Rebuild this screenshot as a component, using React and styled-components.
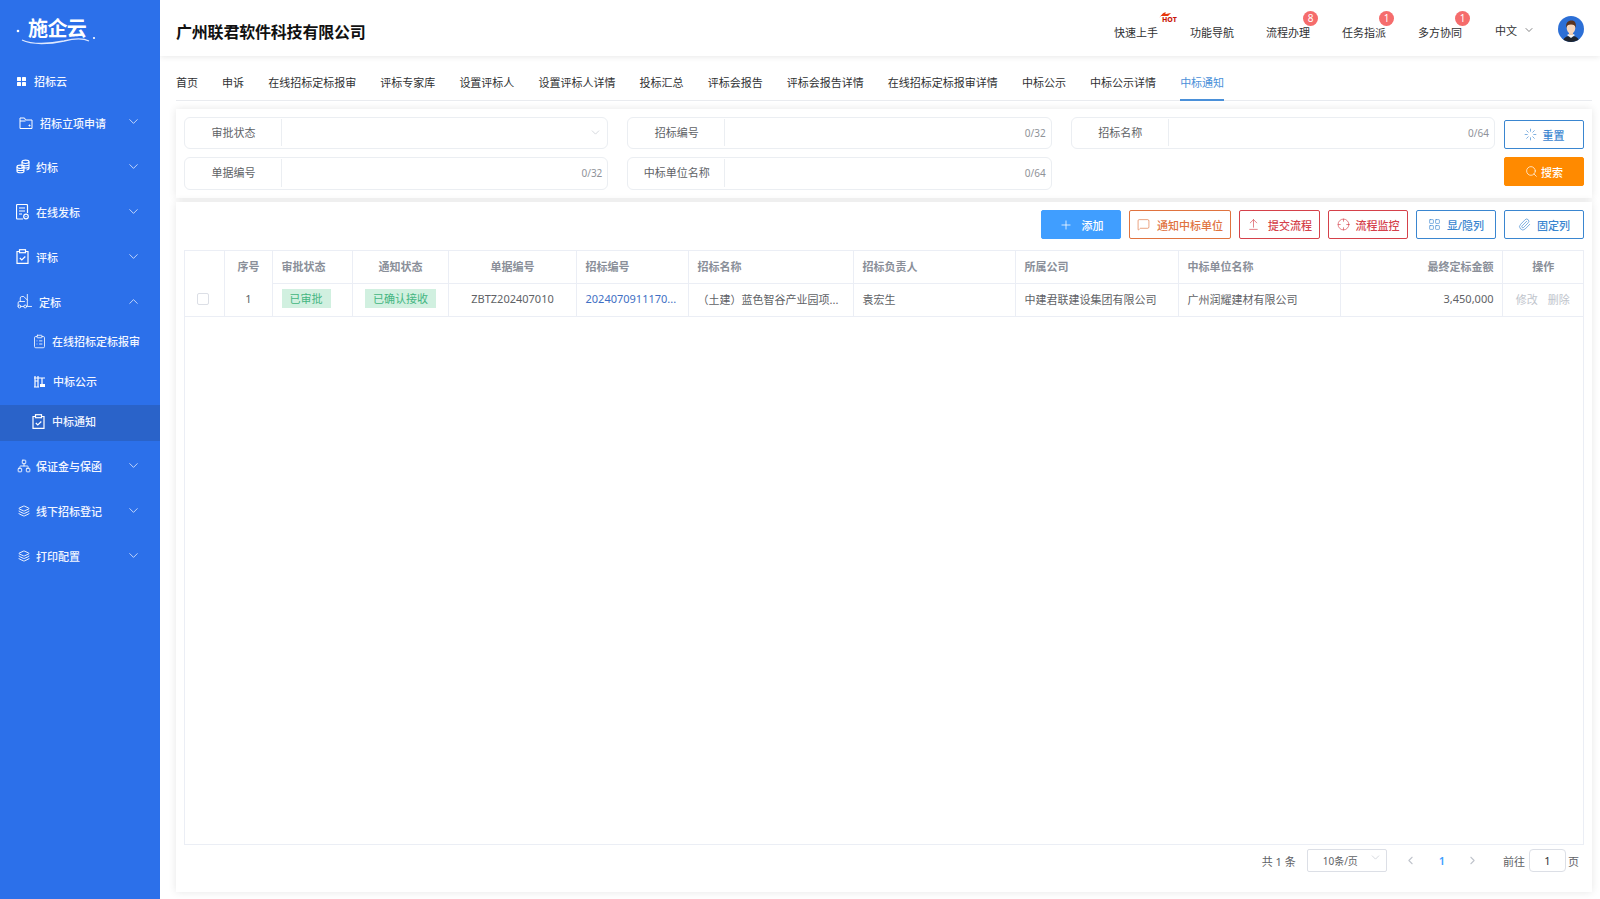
import React from "react";
import styled, { createGlobalStyle } from "styled-components";
import {
  ChevronDown, ChevronUp, ChevronLeft, ChevronRight, Forklift,
  ClipboardList, Network, Layers, Plus, MessageSquare, ArrowUpFromLine, Crosshair, LayoutGrid,
  Paperclip, Search, Loader,
} from "lucide-react";

const Global = createGlobalStyle`
  html, body { margin: 0; padding: 0; height: 100%; overflow: hidden; background: #fff; }
  #root { height: 100%; }
  * { box-sizing: border-box; }
  body { font-family: "Noto Sans", "Noto Sans CJK SC", sans-serif; font-size: 11px; color: #303133; }
`;

const Page = styled.div`display: flex; width: 1600px; height: 899px; overflow: hidden;`;
const Sidebar = styled.aside`width: 160px; flex: none; background: #2c70ea; color: #fff; display: flex; flex-direction: column; position: relative; z-index: 3;`;
const LogoBox = styled.div`height: 62px; padding: 16px 0 0 28px; position: relative;`;
const LogoText = styled.div`font-size: 20px; line-height: 26px; font-weight: 700; color: #fff; letter-spacing: -.6px;`;
const Swoosh = styled.svg`position: absolute; left: 14px; top: 26px;`;
const NavItem = styled.div`
  height: ${p => p.$h || 45}px; margin-top: ${p => p.$mt || 0}px; display: flex; align-items: center; padding-left: ${p => p.$left || 17}px;
  padding-bottom: ${p => p.$pb ?? 2}px;
  gap: ${p => p.$gap || 5}px; position: relative; font-weight: 500; color: #f2f6ff;
  background: ${p => p.$active ? "#2a63c9" : "transparent"};
  svg.ico { flex: none; }
`;
const NavChevron = styled.span`position: absolute; left: 126px; top: 50%; margin-top: -9px; display: flex;`;
const Main = styled.main`flex: 1; min-width: 0; display: flex; flex-direction: column;`;
const Header = styled.header`height: 56px; flex: none; background: #fff; box-shadow: 0 1px 6px rgba(0,0,0,.09); display: flex; align-items: center; padding: 0 16px; position: relative; z-index: 2;`;
const Company = styled.h1`margin: 0; font-size: 16px; font-weight: 700; color: #111; flex: 1; letter-spacing: -.2px; line-height: 20px; padding-top: 7px;`;
const HeaderNav = styled.nav`display: flex; gap: 32px; align-items: center; margin-right: 33px; padding-top: 10px;`;
const HeaderLink = styled.span`position: relative; width: 44px; color: #303133; white-space: nowrap; line-height: 16px;`;
const Badge = styled.span`position: absolute; top: -14px; left: 37px; width: 15px; height: 15px; border-radius: 50%; background: #f56c6c; color: #fff; font-size: 10px; line-height: 15px; text-align: center;`;
const Hot = styled.span`position: absolute; left: 44px; top: -15px; display: block; width: 22px; height: 14px;`;
const HotText = styled.span`position: absolute; left: 4px; top: 6px; font-size: 7px; line-height: 7px; font-weight: 800; color: #c9170a; letter-spacing: 0;`;
const Lang = styled.div`display: flex; align-items: center; gap: 6px; margin-right: 23px; padding-top: 4px;`;
const Avatar = styled.svg`flex: none; margin-top: 1px;`;
const Content = styled.div`flex: 1; padding: 0 8px 7px 16px; display: flex; flex-direction: column; min-height: 0;`;
const Tabs = styled.div`height: 45px; flex: none; display: flex; gap: 24.1px; border-bottom: 1px solid #e9ebef; padding-top: 10px; margin-bottom: 8px;`;
const Tab = styled.div`
  height: 35px; line-height: 33px; white-space: nowrap; color: ${p => p.$active ? "#4a90d9" : "#303133"};
  border-bottom: 2px solid ${p => p.$active ? "#4a90d9" : "transparent"};
`;
const Card = styled.section`background: #fff; box-shadow: 0 0 8px rgba(0,0,0,.1); padding: 8px;`;
const FilterCard = styled(Card)`display: flex; gap: 9px; height: 89px; flex: none;`;
const Fields = styled.div`flex: 1; display: grid; grid-template-columns: repeat(3, 1fr); grid-auto-rows: 32px; gap: 8px 19px;`;
const Field = styled.div`display: flex; border: 1px solid #ebeef2; border-radius: 6px; height: ${p => p.$tall ? 33 : 32}px; align-items: stretch; background: #fff;`;
const FieldLabel = styled.div`width: 97px; flex: none; display: flex; align-items: center; justify-content: center; padding-bottom: ${p => p.$tall ? 4 : 2}px; color: #606266; position: relative; &::after { content: ""; position: absolute; right: 0; top: 1px; bottom: 2px; width: 1px; background: #ebeef2; }`;
const FieldValue = styled.div`flex: 1; display: flex; align-items: center; justify-content: flex-end; padding-right: 5px; padding-bottom: 1px; color: #909399; font-size: 10px;`;
const FilterButtons = styled.div`width: 80px; flex: none; display: flex; flex-direction: column; gap: 8px; padding-top: 3px;`;
const Button = styled.button`
  height: 29px; width: ${p => p.$w || 80}px; flex: none; display: flex; align-items: center; justify-content: center; gap: ${p => p.$gap || 6}px;
  font: 500 11px "Noto Sans", "Noto Sans CJK SC", sans-serif; padding: 0; border-radius: 2px;
  border: 1px solid ${p => p.$border}; color: ${p => p.$color}; background: ${p => p.$bg || "#fff"};
`;
const TableCard = styled(Card)`margin-top: 4px; flex: 1; display: flex; flex-direction: column; min-height: 0;`;
const Toolbar = styled.div`display: flex; justify-content: flex-end; gap: 8px; margin-bottom: 11px; flex: none;`;
const TableWrap = styled.div`flex: 1; border: 1px solid #ebeef5; min-height: 0;`;
const Table = styled.table`width: 1398px; table-layout: fixed; border-collapse: collapse;`;
const Th = styled.th`
  height: 32px; padding: 0 8px 2px 9px; font-weight: 600; font-size: 11px; color: #8a8f99; text-align: ${p => p.$align || "left"};
  border-right: 1px solid #ebeef5; border-bottom: ${p => p.$noLine ? "0" : "1px solid #ebeef5"}; &:last-child { border-right: 0; }
`;
const Td = styled.td`
  height: 33px; padding: 0 ${p => p.$flush ? 0 : 8}px 2px ${p => p.$flush ? 0 : 9}px; color: #606266; text-align: ${p => p.$align || "left"}; white-space: nowrap; overflow: hidden; text-overflow: ellipsis;
  border-right: 1px solid #ebeef5; border-bottom: 1px solid #ebeef5; &:last-child { border-right: 0; }
`;
const Check = styled.span`display: block; width: 12px; height: 12px; margin: 2px 0 0 3px; border: 1px solid #dcdfe6; border-radius: 2px; background: #fff;`;
const Tag = styled.span`display: inline-block; height: 19px; line-height: 19px; padding: 0 8px; background: #d1f0e0; color: #43b581; font-size: 11px;`;
const LinkText = styled.span`color: #3f6fc4;`;
const Action = styled.span`color: #c0c4cc; margin: 0 5px;`;
const Pager = styled.div`height: 47px; flex: none; display: flex; align-items: center; justify-content: flex-end; color: #606266; padding: 0 5px 16px 0; margin-bottom: -8px;`;
const PageSelect = styled.div`position: relative; width: 80px; height: 23px; border: 1px solid #dcdfe6; border-radius: 2px; margin: 0 17px 0 11px; line-height: 23px; padding-left: 15px; font-size: 10px;`;
const SelectChevron = styled.span`position: absolute; right: 4px; top: 1px; color: #c0c4cc; display: flex;`;
const PageNum = styled.span`color: #409eff; font-weight: 600; margin: 0 21px 0 22px;`;
const PageInput = styled.div`width: 37px; height: 23px; line-height: 21px; text-align: center; border: 1px solid #dcdfe6; border-radius: 4px; margin: 0 2px 0 4px; color: #303133;`;
const ArrowBox = styled.span`display: flex; color: #c0c4cc;`;
const JumpLabel = styled.span`margin-left: 24px;`;

const FolderDot = () => (
  <svg className="ico" width="14" height="14" viewBox="0 0 14 14" fill="none" stroke="#fff" strokeWidth="1"><path d="M1 12.5V2h4.500l1 2H13v8.500z" /><path d="M1 5h5.500" /><circle cx="10.500" cy="9.500" r=".6" fill="#fff" /></svg>
);
const GridFill = () => (
  <svg className="ico" width="9" height="9" viewBox="0 0 9 9" fill="#fff"><rect width="4" height="4" rx=".6" /><rect x="5" width="4" height="4" rx=".6" /><rect y="5" width="4" height="4" rx=".6" /><rect x="5" y="5" width="4" height="4" rx=".6" /></svg>
);
const Crane = () => (
  <svg className="ico" width="13" height="13" viewBox="0 0 13 13" fill="none" stroke="#fff" strokeWidth="1.2"><path d="M2 1v11M5 1v11M1 12h5M1 3h11M2 6h3M9 3v6" /><rect x="7" y="9" width="5" height="3" fill="#fff" stroke="none" /></svg>
);
const CoinStack = () => (
  <svg className="ico" width="14" height="15" viewBox="0 0 14 15" fill="none" stroke="#fff" strokeWidth="1.1">
    <ellipse cx="9.500" cy="2.800" rx="3.500" ry="1.700" /><path d="M6 2.800V9M13 2.800v6.700c0 .8-.9 1.300-2.500 1.500M6 6c.8.800 5.500 1 7 0M6.500 8.500c2 .6 5 .5 6.500-.3" />
    <ellipse cx="4.500" cy="7.800" rx="3.500" ry="1.700" /><path d="M1 7.800v4.500c0 2 7 2 7 0V7.800M1 10.200c0 1.800 7 1.800 7 0" />
  </svg>
);
const FileGear = () => (
  <svg className="ico" width="13" height="16" viewBox="0 0 13 16" fill="none" stroke="#fff" strokeWidth="1.2">
    <path d="M7 15H1.500a1 1 0 0 1-1-1V1.500a1 1 0 0 1 1-1h9a1 1 0 0 1 1 1V9" /><path d="M3 4h6M3 7h6M3 10h3" />
    <circle cx="10" cy="12.500" r="2.300" /><circle cx="10" cy="12.500" r=".6" fill="#fff" stroke="none" />
  </svg>
);
const ClipCheck = () => (
  <svg className="ico" width="13" height="15" viewBox="0 0 13 15" fill="none" stroke="#fff" strokeWidth="1.2">
    <path d="M3.500 2.500H1v11.900h11V2.500H9.500" /><rect x="3.500" y=".7" width="6" height="3" /><path d="M3.800 9l2 2 3.500-3.500" />
  </svg>
);
const ic = { className: "ico", color: "#fff", strokeWidth: 1.5 };

const Item = ({ icon, label, open, ...rest }) => (
  <NavItem {...rest}>
    {icon}<span>{label}</span>
    {open !== undefined && <NavChevron>{open ? <ChevronUp size={15} strokeWidth={1.2} /> : <ChevronDown size={15} strokeWidth={1.2} />}</NavChevron>}
  </NavItem>
);

const tabs = ["首页", "申诉", "在线招标定标报审", "评标专家库", "设置评标人", "设置评标人详情", "投标汇总", "评标会报告", "评标会报告详情", "在线招标定标报审详情", "中标公示", "中标公示详情", "中标通知"];
const cols = [39, 48, 80, 96, 128, 112, 165, 162, 163, 162, 162, 81];

export default function App() {
  return (
    <Page>
      <Global />
      <Sidebar>
        <LogoBox>
          <LogoText>施企云</LogoText>
          <Swoosh width="84" height="24" viewBox="0 0 84 24" fill="none" stroke="#dfe9ff">
            <circle cx="4" cy="5" r="1.300" fill="#fff" stroke="none" />
            <circle cx="80" cy="12" r="1.100" fill="#fff" stroke="none" />
            <path d="M8 14c10 5 28 4 42 1 8-2 19-3 25 0" strokeWidth="1.300" />
          </Swoosh>
        </LogoBox>
        <Item $h={38} $pb={0} icon={<GridFill />} label="招标云" $gap={8} />
        <Item $pb={0} icon={<FolderDot />} label="招标立项申请" $left={19} $gap={7} open={false} />
        <Item icon={<CoinStack />} label="约标" $left={16} $gap={6} open={false} />
        <Item icon={<FileGear />} label="在线发标" $left={16} $gap={7} open={false} />
        <Item icon={<ClipCheck />} label="评标" $left={16} $gap={7} open={false} />
        <Item icon={<Forklift size={17} {...ic} strokeWidth={1.2} />} label="定标" $left={16} $gap={6} open />
        <Item $h={34} icon={<ClipboardList size={15} {...ic} strokeWidth={1.3} />} label="在线招标定标报审" $left={32} $gap={5} />
        <Item $h={46} icon={<Crane />} label="中标公示" $left={33} $gap={7} />
        <Item $h={36} $pb={4} $active icon={<ClipCheck />} label="中标通知" $left={32} $gap={7} />
        <Item $mt={3} icon={<Network size={14} {...ic} />} label="保证金与保函" open={false} />
        <Item icon={<Layers size={12} {...ic} strokeWidth={1.8} />} label="线下招标登记" $left={18} $gap={6} open={false} />
        <Item icon={<Layers size={12} {...ic} strokeWidth={1.8} />} label="打印配置" $left={18} $gap={6} open={false} />
      </Sidebar>
      <Main>
        <Header>
          <Company>广州联君软件科技有限公司</Company>
          <HeaderNav>
            <HeaderLink>快速上手
              <Hot>
                <svg width="16" height="10" viewBox="0 0 16 10" fill="#e8380d"><path d="M1 6C3 4 4 1 8 0 7 1 7 2 8 2c2 0 3-1 5-1-1 1-2 2-3 3H3z" /></svg>
                <HotText>HOT</HotText>
              </Hot>
            </HeaderLink>
            <HeaderLink>功能导航</HeaderLink>
            <HeaderLink>流程办理<Badge>8</Badge></HeaderLink>
            <HeaderLink>任务指派<Badge>1</Badge></HeaderLink>
            <HeaderLink>多方协同<Badge>1</Badge></HeaderLink>
          </HeaderNav>
          <Lang>中文<ChevronDown size={12} strokeWidth={1.2} /></Lang>
          <Avatar width="26" height="26" viewBox="0 0 26 26">
            <clipPath id="av"><circle cx="13" cy="13" r="13" /></clipPath>
            <g clipPath="url(#av)">
              <rect width="26" height="26" fill="#2c6fd6" />
              <path d="M5 26c0-5 4-6 8-6s8 1 8 6z" fill="#1f2530" />
              <path d="M9 19l4 3 4-3-2-1h-4z" fill="#f4f4f4" />
              <rect x="11" y="15" width="4" height="4" fill="#eec9ac" />
              <ellipse cx="13" cy="12" rx="4.300" ry="5.500" fill="#f6d6bd" />
              <path d="M8.300 12C7.500 6.500 10 4.500 13.500 4.500S18.500 7 17.700 12c-.5-2.500-1.700-3.500-4.700-3.500s-4.200 1-4.700 3.500z" fill="#5a3420" />
            </g>
          </Avatar>
        </Header>
        <Content>
          <Tabs>{tabs.map((t, i) => <Tab key={t} $active={i === tabs.length - 1}>{t}</Tab>)}</Tabs>
          <FilterCard>
            <Fields>
              <Field><FieldLabel>审批状态</FieldLabel><FieldValue><ChevronDown size={13} strokeWidth={1.2} color="#c0c4cc" /></FieldValue></Field>
              <Field><FieldLabel>招标编号</FieldLabel><FieldValue>0/32</FieldValue></Field>
              <Field><FieldLabel>招标名称</FieldLabel><FieldValue>0/64</FieldValue></Field>
              <Field $tall><FieldLabel $tall>单据编号</FieldLabel><FieldValue>0/32</FieldValue></Field>
              <Field $tall><FieldLabel $tall>中标单位名称</FieldLabel><FieldValue>0/64</FieldValue></Field>
            </Fields>
            <FilterButtons>
              <Button $border="#3a86d0" $color="#3a86d0"><Loader size={13} strokeWidth={1.2} />重置</Button>
              <Button $border="#ff8a00" $color="#fff" $bg="#ff8a00" $gap={3}><Search size={13} strokeWidth={1.3} />搜索</Button>
            </FilterButtons>
          </FilterCard>
          <TableCard>
            <Toolbar>
              <Button $border="#409eff" $color="#fff" $bg="#409eff" $gap={9}><Plus size={14} strokeWidth={1.3} />添加</Button>
              <Button $w={102} $border="#e0733f" $color="#e0733f" $gap={7}><MessageSquare size={13} strokeWidth={1.2} />通知中标单位</Button>
              <Button $w={81} $border="#d5414a" $color="#d5414a" $gap={8}><ArrowUpFromLine size={13} strokeWidth={1.2} />提交流程</Button>
              <Button $border="#d5414a" $color="#d5414a" $gap={6}><Crosshair size={13} strokeWidth={1.2} />流程监控</Button>
              <Button $border="#3a86d0" $color="#3a86d0" $gap={6}><LayoutGrid size={13} strokeWidth={1.2} />显/隐列</Button>
              <Button $border="#3a86d0" $color="#3a86d0" $gap={6}><Paperclip size={13} strokeWidth={1.2} />固定列</Button>
            </Toolbar>
            <TableWrap>
              <Table>
                <colgroup>{cols.map((w, i) => <col key={i} style={{ width: w }} />)}</colgroup>
                <thead>
                  <tr>
                    <Th $noLine />
                    <Th $align="center" $noLine>序号</Th>
                    <Th>审批状态</Th>
                    <Th $align="center">通知状态</Th>
                    <Th $align="center">单据编号</Th>
                    <Th>招标编号</Th>
                    <Th>招标名称</Th>
                    <Th>招标负责人</Th>
                    <Th>所属公司</Th>
                    <Th>中标单位名称</Th>
                    <Th $align="right">最终定标金额</Th>
                    <Th $align="center">操作</Th>
                  </tr>
                </thead>
                <tbody>
                  <tr>
                    <Td><Check /></Td>
                    <Td $align="center">1</Td>
                    <Td><Tag>已审批</Tag></Td>
                    <Td $align="center"><Tag>已确认接收</Tag></Td>
                    <Td $align="center">ZBTZ202407010</Td>
                    <Td><LinkText>2024070911170...</LinkText></Td>
                    <Td>（土建）蓝色智谷产业园项...</Td>
                    <Td>袁宏生</Td>
                    <Td>中建君联建设集团有限公司</Td>
                    <Td>广州润耀建材有限公司</Td>
                    <Td $align="right">3,450,000</Td>
                    <Td $align="center" $flush><Action>修改</Action><Action>删除</Action></Td>
                  </tr>
                </tbody>
              </Table>
            </TableWrap>
            <Pager>
              <span>共 1 条</span>
              <PageSelect>10条/页<SelectChevron><ChevronDown size={13} strokeWidth={1.2} /></SelectChevron></PageSelect>
              <ArrowBox><ChevronLeft size={13} /></ArrowBox>
              <PageNum>1</PageNum>
              <ArrowBox><ChevronRight size={13} /></ArrowBox>
              <JumpLabel>前往</JumpLabel>
              <PageInput>1</PageInput>
              <span>页</span>
            </Pager>
          </TableCard>
        </Content>
      </Main>
    </Page>
  );
}
